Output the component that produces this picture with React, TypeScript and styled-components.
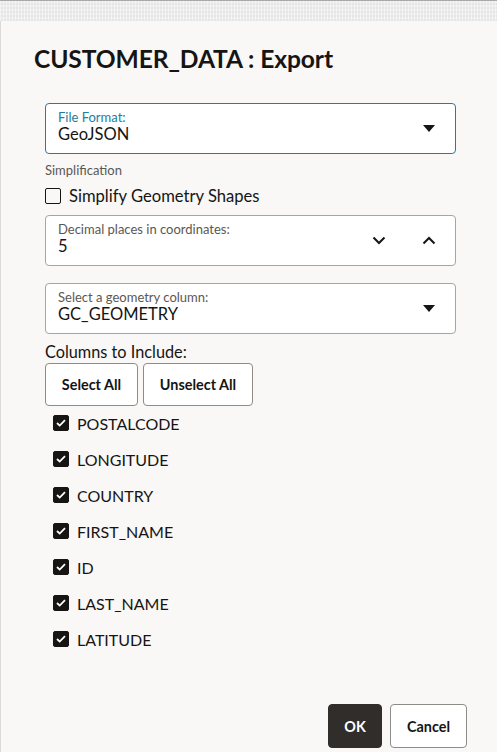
import styled, { createGlobalStyle } from 'styled-components';

const GlobalStyle = createGlobalStyle`
    html, body {
        margin: 0;
        padding: 0;
        background: #f9f8f6;
        font-family: Lato, "Noto Sans", sans-serif;
        color: #161513;
    }
`;

const Page = styled.div`
    width: 497px;
    height: 752px;
    display: flex;
    flex-direction: column;
    overflow: hidden;
`;

// textured backdrop peeking above the dialog
const Backdrop = styled.div`
    height: 20px;
    border-top: 1px solid #a9a9a9;
    background-color: #ececec;
    background-image: repeating-linear-gradient(90deg, rgba(255,255,255,0.5) 0 1px, transparent 1px 3px),
        repeating-linear-gradient(0deg, rgba(0,0,0,0.03) 0 2px, transparent 2px 4px);
`;

const Dialog = styled.div`
    flex: 1;
    display: flex;
    flex-direction: column;
    background: #f9f8f6;
    border-left: 1px solid #dcdad7;
`;

const Title = styled.h1`
    margin: 0;
    padding: 24px 0 0 33px;
    font-size: 24.6px;
    line-height: 28px;
    font-weight: 700;
    letter-spacing: -0.1px;
`;

const Body = styled.div`
    display: flex;
    flex-direction: column;
    padding: 30px 41px 0 44px;
`;

const Field = styled.div<{ $focused?: boolean; $gap?: number }>`
    height: 51px;
    box-sizing: border-box;
    margin-top: ${p => p.$gap ?? 0}px;
    border: 1px solid ${p => (p.$focused ? '#2c7a94' : '#a8a5a1')};
    border-radius: 4px;
    background: #fff;
    display: flex;
    align-items: center;
    padding: 0 12px;
`;

const FieldText = styled.div`
    flex: 1;
    display: flex;
    flex-direction: column;
    padding-bottom: 4px;
`;

const FieldLabel = styled.span<{ $focused?: boolean }>`
    font-size: 13px;
    line-height: 15px;
    color: ${p => (p.$focused ? '#227e9e' : '#5b5753')};
`;

const FieldValue = styled.span`
    font-size: 16.5px;
    line-height: 19px;
    color: #161513;
`;

const IconSlot = styled.span`
    width: 24px;
    height: 24px;
    display: flex;
    align-items: center;
    justify-content: center;
    margin-left: 24px;
    margin-right: 2px;
`;

const SectionLabel = styled.div`
    margin-top: 8px;
    font-size: 13px;
    line-height: 16px;
    color: #5b5753;
`;

const CheckRow = styled.label<{ $indent?: number; $height: number; $size?: number }>`
    display: flex;
    align-items: center;
    gap: 8px;
    height: ${p => p.$height}px;
    padding-left: ${p => p.$indent ?? 0}px;
    font-size: ${p => p.$size ?? 16}px;
`;

const Box = styled.span<{ $checked?: boolean }>`
    width: 16px;
    height: 16px;
    box-sizing: border-box;
    border-radius: 2px;
    border: 1.5px solid #161513;
    background: ${p => (p.$checked ? '#161513' : 'transparent')};
    display: flex;
    align-items: center;
    justify-content: center;
`;

const ColumnsLabel = styled.div`
    margin-top: 8px;
    font-size: 16.3px;
    line-height: 20px;
`;

const ButtonRow = styled.div<{ $end?: boolean }>`
    display: flex;
    gap: ${p => (p.$end ? 8 : 5)}px;
    justify-content: ${p => (p.$end ? 'flex-end' : 'flex-start')};
`;

const Button = styled.button<{ $primary?: boolean; $width: number; $height?: number }>`
    width: ${p => p.$width}px;
    height: ${p => p.$height ?? 44}px;
    border-radius: 4px;
    border: 1px solid ${p => (p.$primary ? '#312d2a' : '#8f8b87')};
    background: ${p => (p.$primary ? '#312d2a' : '#fff')};
    color: ${p => (p.$primary ? '#fff' : '#161513')};
    font-family: Lato, "Noto Sans", sans-serif;
    font-size: 14.4px;
    font-weight: 700;
    padding: 0;
`;

const ToolsRow = styled(ButtonRow)`
    margin-top: 1px;
`;

const ColumnList = styled.div`
    display: flex;
    flex-direction: column;
    margin-top: -1px;
`;

const Footer = styled(ButtonRow)`
    margin-top: auto;
    padding: 0 30px 4px 0;
`;

const Caret = () => (
    <svg width="12" height="7" viewBox="0 0 12 7">
        <path d="M0 0h12L6 7z" fill="#161513" />
    </svg>
);

const Chevron = ({ up }: { up?: boolean }) => (
    <svg width="14" height="9" viewBox="0 0 14 9">
        <path d={up ? 'M1.5 7.5L7 2l5.5 5.5' : 'M1.5 1.5L7 7l5.5-5.5'} fill="none" stroke="#161513" strokeWidth="2" />
    </svg>
);

const Check = () => (
    <svg width="10" height="8" viewBox="0 0 10 8">
        <path d="M1 4l2.7 2.6L9 1.2" fill="none" stroke="#fff" strokeWidth="1.8" />
    </svg>
);

const columns = ['POSTALCODE', 'LONGITUDE', 'COUNTRY', 'FIRST_NAME', 'ID', 'LAST_NAME', 'LATITUDE'];

export default function App() {
    return (
        <Page>
            <GlobalStyle />
            <Backdrop />
            <Dialog>
                <Title>CUSTOMER_DATA : Export</Title>
                <Body>
                    <Field $focused>
                        <FieldText>
                            <FieldLabel $focused>File Format:</FieldLabel>
                            <FieldValue>GeoJSON</FieldValue>
                        </FieldText>
                        <IconSlot><Caret /></IconSlot>
                    </Field>
                    <SectionLabel>Simplification</SectionLabel>
                    <CheckRow $height={22} $size={16.6} style={{ marginTop: 7 }}>
                        <Box />
                        Simplify Geometry Shapes
                    </CheckRow>
                    <Field $gap={8}>
                        <FieldText>
                            <FieldLabel>Decimal places in coordinates:</FieldLabel>
                            <FieldValue>5</FieldValue>
                        </FieldText>
                        <IconSlot><Chevron /></IconSlot>
                        <IconSlot><Chevron up /></IconSlot>
                    </Field>
                    <Field $gap={17}>
                        <FieldText>
                            <FieldLabel>Select a geometry column:</FieldLabel>
                            <FieldValue>GC_GEOMETRY</FieldValue>
                        </FieldText>
                        <IconSlot><Caret /></IconSlot>
                    </Field>
                    <ColumnsLabel>Columns to Include:</ColumnsLabel>
                    <ToolsRow>
                        <Button $width={93} $height={43}>Select All</Button>
                        <Button $width={110} $height={43}>Unselect All</Button>
                    </ToolsRow>
                    <ColumnList>
                        {columns.map(c => (
                            <CheckRow key={c} $height={36} $indent={8}>
                                <Box $checked><Check /></Box>
                                {c}
                            </CheckRow>
                        ))}
                    </ColumnList>
                </Body>
                <Footer $end>
                    <Button $primary $width={54}>OK</Button>
                    <Button $width={77}>Cancel</Button>
                </Footer>
            </Dialog>
        </Page>
    );
}
